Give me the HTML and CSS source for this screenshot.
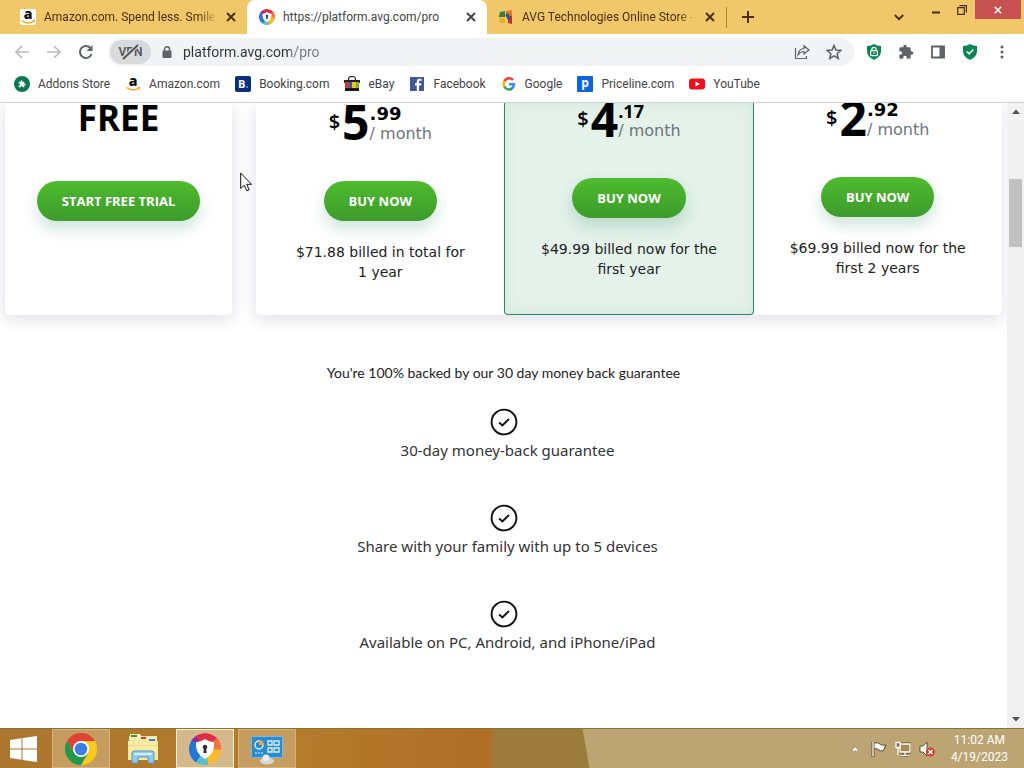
FILE: index.html
```html
<!DOCTYPE html>
<html lang="en">
<head>
<meta charset="utf-8">
<title>platform.avg.com/pro</title>
<meta name="viewport" content="width=device-width, initial-scale=1">
<link rel="stylesheet" href="styles.css">
</head>
<body>
<svg class="defs" aria-hidden="true">
  <symbol id="x" viewBox="0 0 10 10"><path d="M1 1l8 8M9 1L1 9" fill="none" stroke="currentColor" stroke-width="1.9"/></symbol>
  <symbol id="check" viewBox="0 0 28 28"><circle cx="14" cy="14" r="12.400" fill="none" stroke="#111" stroke-width="1.900"/><path d="M9.200 14.500l3.200 3 6.600-6.500" fill="none" stroke="#111" stroke-width="1.900"/></symbol>
  <symbol id="puzzle" viewBox="0 0 24 24"><path d="M20.500 11H19V7a2 2 0 0 0-2-2h-4V3.500a2.500 2.500 0 0 0-5 0V5H4a2 2 0 0 0-2 2v3.800h1.500a2.700 2.700 0 0 1 0 5.400H2V20a2 2 0 0 0 2 2h3.800v-1.500a2.700 2.700 0 0 1 5.400 0V22H17a2 2 0 0 0 2-2v-4h1.500a2.500 2.500 0 0 0 0-5z" fill="currentColor"/></symbol>
  <symbol id="avg" viewBox="0 0 32 32">
    <g fill="none" stroke-width="9">
      <path d="M6 10A11.500 11.500 0 0 1 17 5.500" stroke="#8b2b9d"/>
      <path d="M9.500 7A11.500 11.500 0 0 1 26 10" stroke="#e22c45"/>
      <path d="M24.500 8A11.500 11.500 0 0 1 27.200 19" stroke="#f5713d"/>
      <path d="M27.500 16.500A11.500 11.500 0 0 1 16 27.500" stroke="#fbb92b"/>
      <path d="M18.500 27.200A11.500 11.500 0 0 1 8 24.200" stroke="#54c3cf"/>
      <path d="M9.500 25.500A11.500 11.500 0 0 1 6.500 9.500" stroke="#2475d6"/>
    </g>
    <path d="M16 6q4 3 9 3.300 1.500 11-9 16.700Q5.500 20.300 7 9.300q5-.3 9-3.300z" fill="#fff"/>
    <circle cx="16" cy="14" r="2.300" fill="#333"/><path d="M15 14h2l.7 6h-3.400z" fill="#333"/>
  </symbol>
</svg>

<header class="browser">
  <div class="tabstrip">
    <nav class="tabs" aria-label="Tabs">
      <div class="tab tab-first">
        <svg class="favicon favicon-tile" viewBox="0 0 16 16"><text x="8" y="10" text-anchor="middle" font-family="Open Sans, sans-serif" font-weight="800" font-size="14" fill="#111">a</text><path d="M1.500 11.500q6.500 4.500 12 .8" fill="none" stroke="#f5a51c" stroke-width="1.500"/><path d="M12.200 11.300l2.600-.2-.8 2.500" fill="none" stroke="#f5a51c"/></svg>
        <a class="tab-title tab-fade" href="#">Amazon.com. Spend less. Smile more.</a>
        <button class="tab-close" aria-label="Close tab"><svg class="i10"><use href="#x"/></svg></button>
      </div>
      <div class="tab tab-active">
        <svg class="favicon"><use href="#avg"/></svg>
        <a class="tab-title" href="#">https://platform.avg.com/pro</a>
        <button class="tab-close" aria-label="Close tab"><svg class="i10"><use href="#x"/></svg></button>
      </div>
      <div class="tab tab-last">
        <svg class="favicon" viewBox="0 0 16 16"><path d="M2 3l5-1v6H1z" fill="#33813b"/><path d="M8 2l6-1v6L8 8z" fill="#e27b1f"/><path d="M1 9h6v5H2z" fill="#f0a92a"/><path d="M6 6l4 3v5l4 1V7z" fill="#c02c2b"/><path d="M8 4l3 1 1 6-3-1z" fill="#1b5c9e"/></svg>
        <a class="tab-title tab-fade" href="#">AVG Technologies Online Store -</a>
        <button class="tab-close" aria-label="Close tab"><svg class="i10"><use href="#x"/></svg></button>
      </div>
      <button class="new-tab" aria-label="New tab"><svg class="i12" viewBox="0 0 12 12"><path d="M6 0v12M0 6h12" stroke="currentColor" stroke-width="2"/></svg></button>
    </nav>
    <div class="window-controls">
      <button class="tab-search" aria-label="Search tabs"><svg class="i10" viewBox="0 0 10 10"><path d="M.8 3L5 7.200 9.200 3" fill="none" stroke="currentColor" stroke-width="2"/></svg></button>
      <button class="win-btn" aria-label="Minimize"><svg class="i10" viewBox="0 0 10 10"><path d="M1 7.500h8" stroke="currentColor" stroke-width="2"/></svg></button>
      <button class="win-btn" aria-label="Restore"><svg class="i10" viewBox="0 0 10 10"><path d="M.7 2.700h6.600v6.600H.7zM2.500.6h6.900v6.900" fill="none" stroke="currentColor" stroke-width="1.200"/></svg></button>
      <button class="win-btn win-close" aria-label="Close"><svg class="i8"><use href="#x"/></svg></button>
    </div>
  </div>

  <div class="toolbar">
    <button class="tool tool-dim" aria-label="Back"><svg class="i16" viewBox="0 0 16 16"><path d="M15 8H2M8 2L2 8l6 6" fill="none" stroke="currentColor" stroke-width="1.700"/></svg></button>
    <button class="tool tool-dim" aria-label="Forward"><svg class="i16" viewBox="0 0 16 16"><path d="M1 8h13M8 2l6 6-6 6" fill="none" stroke="currentColor" stroke-width="1.700"/></svg></button>
    <button class="tool" aria-label="Reload"><svg class="i16" viewBox="0 0 16 16"><path d="M13.600 10A6 6 0 1 1 12.500 4" fill="none" stroke="currentColor" stroke-width="2"/><path d="M14.500 1v6h-6z" fill="currentColor"/></svg></button>
    <div class="omnibox">
      <button class="vpn">VPN<svg class="vpn-slash" viewBox="0 0 24 16"><path d="M5 15L20 1" stroke="#d9dadc" stroke-width="4"/><path d="M5 15L20 1" stroke="#555" stroke-width="2"/></svg></button>
      <svg class="lock" viewBox="0 0 10 12"><path d="M2.500 5V3.300a2.500 2.500 0 0 1 5 0V5" fill="none" stroke="#5f6368" stroke-width="1.400"/><rect x=".5" y="4.500" width="9" height="7.500" rx="1" fill="#5f6368"/></svg>
      <input class="url" type="text" aria-label="Address" value="platform.avg.com/pro">
      <button class="tool" aria-label="Share"><svg class="i16" viewBox="0 0 16 16"><path d="M1.500 4v10.500h11V12M4 11q.5-6 6-6.500V1.800L15 6l-5 4V7.500Q6.500 7.500 4 11z" fill="none" stroke="currentColor" stroke-width="1.200"/></svg></button>
      <button class="tool" aria-label="Bookmark"><svg class="i16" viewBox="0 0 16 16"><path d="M8 1.500l1.900 4.600 5 .4-3.800 3.200 1.200 4.800L8 11.900l-4.300 2.600 1.200-4.800L1.100 6.500l5-.4z" fill="none" stroke="currentColor" stroke-width="1.500"/></svg></button>
    </div>
    <div class="extensions">
      <button class="tool" aria-label="Secure browsing"><svg class="i16" viewBox="0 0 16 16"><path d="M8 0q3 2 7 2v5q0 6-7 9-7-3-7-9V2q4 0 7-2z" fill="#0b8550"/><path d="M5.900 7V5.500a2.100 2.100 0 0 1 4.200 0V7" fill="none" stroke="#fff" stroke-width="1.200"/><rect x="4.600" y="6.600" width="6.800" height="5" rx="1" fill="none" stroke="#fff" stroke-width="1.200"/><path d="M8 8v2" stroke="#fff"/></svg></button>
      <button class="tool" aria-label="Extensions"><svg class="i16"><use href="#puzzle"/></svg></button>
      <button class="tool" aria-label="Side panel"><svg class="i16" viewBox="0 0 16 16"><path d="M2 2.500h12v11H2z" fill="none" stroke="currentColor" stroke-width="1.800"/><path d="M9.500 2h5v12h-5z" fill="currentColor"/></svg></button>
      <button class="tool" aria-label="Site safety"><svg class="i16" viewBox="0 0 16 16"><path d="M8 0q3 2 7 2v5q0 6-7 9-7-3-7-9V2q4 0 7-2z" fill="#0b8550"/><path d="M4.800 7.500l2.300 2.300 4.200-4.300" fill="none" stroke="#fff" stroke-width="1.600"/></svg></button>
      <button class="tool" aria-label="Menu"><svg class="i16" viewBox="0 0 16 16"><g fill="currentColor"><circle cx="8" cy="3" r="1.500"/><circle cx="8" cy="8" r="1.500"/><circle cx="8" cy="13" r="1.500"/></g></svg></button>
    </div>
  </div>

  <nav class="bookmarks" aria-label="Bookmarks">
    <a class="bookmark" href="#"><svg class="i16" viewBox="0 0 16 16"><circle cx="8" cy="8" r="8" fill="#0c7a4d"/><svg x="4" y="4" width="8" height="8" color="#fff"><use href="#puzzle"/></svg></svg>Addons Store</a>
    <a class="bookmark" href="#"><svg class="i16" viewBox="0 0 16 16"><text x="8" y="10" text-anchor="middle" font-family="Open Sans, sans-serif" font-weight="800" font-size="14" fill="#111">a</text><path d="M1.500 11.500q6.500 4.500 12 .8" fill="none" stroke="#f5a51c" stroke-width="1.500"/><path d="M12.200 11.300l2.600-.2-.8 2.500" fill="none" stroke="#f5a51c"/></svg>Amazon.com</a>
    <a class="bookmark" href="#"><svg class="i16" viewBox="0 0 16 16"><rect width="16" height="16" rx="2" fill="#0c2f79"/><text x="3" y="12" font-family="Open Sans, sans-serif" font-weight="700" font-size="11" fill="#fff">B</text><circle cx="12" cy="11" r="1.100" fill="#35a8e8"/></svg>Booking.com</a>
    <a class="bookmark" href="#"><svg class="i16" viewBox="0 0 16 16"><path d="M4.500 5V3.500q0-3 3.500-3t3.500 3V5" fill="none" stroke="#222" stroke-width="1.200"/><path d="M0 4h16v3H0z" fill="#222"/><path d="M1 6h4v6H1z" fill="#e3302d"/><path d="M5 6h3v6H5z" fill="#1c61c9"/><path d="M8 6h4v6H8z" fill="#f4c415"/><path d="M12 6h3v6h-3z" fill="#79b52b"/><path d="M1 12h14v3H1z" fill="#181818"/></svg>eBay</a>
    <a class="bookmark" href="#"><svg class="i16" viewBox="0 0 16 16"><path d="M1 1h14v14H1z" fill="#3f5a9a"/><path d="M10 15V9.500h2.200V7.300H10V6q0-1.200 1.200-1.200h1.300V2.700h-2Q7.800 2.700 7.800 5.500v1.800H6v2.200h1.800V15z" fill="#fff"/></svg>Facebook</a>
    <a class="bookmark" href="#"><svg class="i16" viewBox="0 0 16 16"><g fill="none" stroke-width="2.500"><path d="M12 4A5 5 0 0 0 3.500 5.500" stroke="#e94335"/><path d="M3.700 5A5 5 0 0 0 3.600 11" stroke="#fabb05"/><path d="M3.400 10.500A5 5 0 0 0 11.500 12" stroke="#34a353"/><path d="M11 12.300Q13 10.700 13 8.200H8" stroke="#4285f4"/></g></svg>Google</a>
    <a class="bookmark" href="#"><svg class="i16" viewBox="0 0 16 16"><rect width="16" height="16" rx="1" fill="#0b63dd"/><text x="8" y="11" text-anchor="middle" font-family="Open Sans, sans-serif" font-weight="700" font-size="12" fill="#fff">p</text></svg>Priceline.com</a>
    <a class="bookmark" href="#"><svg class="i16" viewBox="0 0 16 16"><rect y="2.500" width="16" height="11" rx="3" fill="#f0101c"/><path d="M6.500 5.500v5L11 8z" fill="#fff"/></svg>YouTube</a>
  </nav>
</header>

<div class="viewport">
  <main class="page">
    <section class="pricing">
      <article class="plan plan-free">
        <div class="price"><strong class="free">FREE</strong></div>
        <button class="cta">START FREE TRIAL</button>
      </article>
      <div class="paid">
        <article class="plan">
          <div class="price"><span class="currency">$</span><strong class="whole">5</strong><span class="rest"><b class="cents">.99</b><span class="per">/ month</span></span></div>
          <button class="cta">BUY NOW</button>
          <p class="billed">$71.88 billed in total for<br>1 year</p>
        </article>
        <article class="plan plan-featured">
          <div class="price"><span class="currency">$</span><strong class="whole">4</strong><span class="rest"><b class="cents cents-narrow">.17</b><span class="per">/ month</span></span></div>
          <button class="cta">BUY NOW</button>
          <p class="billed">$49.99 billed now for the<br>first year</p>
        </article>
        <article class="plan plan-long">
          <div class="price"><span class="currency">$</span><strong class="whole">2</strong><span class="rest"><b class="cents">.92</b><span class="per">/ month</span></span></div>
          <button class="cta">BUY NOW</button>
          <p class="billed">$69.99 billed now for the<br>first 2 years</p>
        </article>
      </div>
    </section>
    <h2 class="guarantee">You're 100% backed by our 30 day money back guarantee</h2>
    <ul class="benefits">
      <li class="benefit"><svg class="check"><use href="#check"/></svg><span class="benefit-text">30-day money-back guarantee</span></li>
      <li class="benefit"><svg class="check"><use href="#check"/></svg><span class="benefit-text">Share with your family with up to 5 devices</span></li>
      <li class="benefit"><svg class="check"><use href="#check"/></svg><span class="benefit-text">Available on PC, Android, and iPhone/iPad</span></li>
    </ul>
    <svg class="cursor" viewBox="0 0 12 20"><path d="M.7 1v15.500l3.600-3.300 2.500 5.600 2.400-1-2.500-5.500h4.800z" fill="#fff" stroke="#111"/></svg>
  </main>
  <div class="scrollbar">
    <button class="scroll-btn" aria-label="Scroll up"><svg class="arrow" viewBox="0 0 8 5"><path d="M0 5l4-4.500L8 5z" fill="#505050"/></svg></button>
    <div class="track"><div class="thumb"></div></div>
    <button class="scroll-btn" aria-label="Scroll down"><svg class="arrow" viewBox="0 0 8 5"><path d="M0 0l4 4.500L8 0z" fill="#505050"/></svg></button>
  </div>
</div>

<footer class="taskbar">
  <div class="apps">
    <button class="start" aria-label="Start"><svg class="win-logo" viewBox="0 0 28 26"><path d="M0 4l11.500-1.700v10.200H0zM12.500 2.100L27 0v12.500H12.500zM0 13.500h11.500v10.200L0 22zM12.500 13.500H27V26l-14.500-2.100z" fill="#fff"/></svg></button>
    <button class="app app-open" aria-label="Google Chrome"><svg class="i32" viewBox="0 0 32 32"><path d="M9 20L2.140 8A16 16 0 0 1 29.860 8H16z" fill="#df4334"/><path d="M16 8h13.860A16 16 0 0 1 16 32l7-12z" fill="#fbc91c"/><path d="M9 20L2.140 8A16 16 0 0 0 16 32l7-12z" fill="#23974b"/><circle cx="16" cy="16" r="8" fill="#fff"/><circle cx="16" cy="16" r="6.300" fill="#3a7de5"/></svg></button>
    <button class="app" aria-label="File Explorer"><svg class="i32" viewBox="0 0 32 32"><path d="M2 3h28v5H2z" fill="#e9e2b4"/><path d="M3 1h10l2 3h14v3H3z" fill="#f8efb4"/><path d="M4 2h6v2H4z" fill="#2d9b3c"/><path d="M14 4h5v2h-5z" fill="#cf3d36"/><path d="M22 6h6v2h-6z" fill="#3f82c7"/><path d="M1 8h30v19H1z" fill="#f8ea9f"/><path d="M1 12h30v1H1z" fill="#eadb8a"/><path d="M5 30V20q0-2 2-2h18q2 0 2 2v10h-6v-6H11v6z" fill="#92cbed" stroke="#4d99c9"/><path d="M7 20h18v2H7z" fill="#d6effb"/></svg></button>
    <button class="app app-open app-current" aria-label="AVG Secure Browser"><svg class="i32"><use href="#avg"/></svg></button>
    <button class="app app-open" aria-label="Control Panel"><svg class="i32" viewBox="0 0 32 32"><rect x=".5" y="3.500" width="31" height="21" rx="1" fill="#2b8bcd" stroke="#77b9e3"/><circle cx="8" cy="12" r="4" fill="none" stroke="#dceefa" stroke-width="1.500"/><path d="M8 12V7a5 5 0 0 1 5 5z" fill="#f2a63a"/><path d="M17 8h4v4h-4zM23 8h5v4h-5zM17 15h4v4h-4zM23 15h5v4h-5z" fill="none" stroke="#dceefa" stroke-width="1.300"/><path d="M4 20h9" stroke="#dceefa" stroke-dasharray="2 1"/><ellipse cx="16" cy="28" rx="7" ry="3.500" fill="#d7d5d2"/><circle cx="15" cy="25" r="3.500" fill="#ecebe9"/></svg></button>
  </div>
  <div class="tray">
    <svg class="tray-up" viewBox="0 0 8 5"><path d="M0 5l4-4.500L8 5z" fill="#fff" stroke="#6d5a35" stroke-width=".5"/></svg>
    <svg class="i16" viewBox="0 0 16 16"><path d="M2 1v15" stroke="#5e4c2c" stroke-width="3"/><path d="M3 2q4-1 6 1t6 1l-3 6q-3 0-5-1.500T3 8z" fill="#fff" stroke="#5e4c2c"/><path d="M2 1v14.500" stroke="#fff" stroke-width="1.300"/></svg>
    <svg class="i16" viewBox="0 0 16 16"><path d="M5 3h10v8H5zM10 11v3M6 14.500h8" fill="none" stroke="#5e4c2c" stroke-width="3"/><path d="M5 3h10v8H5zM10 11v3M6 14.500h8" fill="#a88b53" stroke="#fff" stroke-width="1.300"/><path d="M1 1.500h4v5H1zM3 7v7" fill="#8b7140" stroke="#fff" stroke-width="1.300"/></svg>
    <svg class="i16" viewBox="0 0 16 16"><path d="M1 5h3l4-4v14l-4-4H1z" fill="#fff" stroke="#5e4c2c"/><circle cx="11.500" cy="11" r="4.500" fill="#d54335"/><path d="M9.500 9l4 4M13.500 9l-4 4" stroke="#fff" stroke-width="1.400"/></svg>
    <div class="clock"><time>11:02 AM</time><time>4/19/2023</time></div>
  </div>
</footer>
</body>
</html>
```
FILE: styles.css
```css
* { box-sizing: border-box; }
body {
  margin: 0;
  height: 100vh;
  display: flex;
  flex-direction: column;
  overflow: hidden;
  background: #fff;
  color: #000;
  font-family: Roboto, "Open Sans", sans-serif;
  font-size: 12px;
}
button {
  border: 0;
  padding: 0;
  background: none;
  color: inherit;
  font: inherit;
  display: flex;
  align-items: center;
  justify-content: center;
}
a { color: inherit; text-decoration: none; }
svg { display: block; flex: none; }
.defs { position: absolute; width: 0; height: 0; }
.i8 { width: 8px; height: 8px; }
.i10 { width: 10px; height: 10px; }
.i12 { width: 12px; height: 12px; }
.i16 { width: 16px; height: 16px; }
.i32 { width: 32px; height: 32px; }

/* Tab strip */
.tabstrip {
  display: flex;
  justify-content: space-between;
  height: 34px;
  background: #f0c869;
  color: #4a2d10;
}
.tabs { display: flex; min-width: 0; }
.tab {
  display: flex;
  align-items: center;
  gap: 8px;
  width: 240px;
  padding: 0 10px 0 12px;
}
.tab-first { width: 247px; padding-left: 20px; }
.tab-active { background: #fff; color: #444; border-radius: 8px 8px 0 0; }
.tab-last { padding-left: 11px; border-right: 1px solid; border-image: linear-gradient(transparent 8px, #a88538 8px 27px, transparent 27px) 1; }
.favicon { width: 16px; height: 16px; }
.favicon-tile { background: #fff; border-radius: 2px; }
.tab-title { flex: 1; min-width: 0; overflow: hidden; white-space: nowrap; line-height: 20px; }
.tab-fade { mask-image: linear-gradient(90deg, #000 90%, transparent); }
.tab-close { width: 12px; height: 16px; }
.new-tab { width: 42px; }
.window-controls { display: flex; align-items: flex-start; }
.tab-search { width: 24px; height: 34px; }
.win-btn { width: 26px; height: 19px; }
.tab-search + .win-btn { margin-left: 12px; }
.win-close { width: 46px; margin-right: 3px; background: #c75050; color: #fff; }

/* Toolbar */
.toolbar {
  display: flex;
  align-items: center;
  gap: 8px;
  height: 36px;
  padding: 0 10px;
  color: #5f6368;
}
.tool { width: 24px; height: 24px; }
.tool-dim { color: #bbb; }
.omnibox {
  flex: 1;
  display: flex;
  align-items: center;
  gap: 8px;
  height: 28px;
  padding: 0 8px 0 2px;
  margin-left: 2px;
  border-radius: 14px;
  background: #f1f3f4;
}
.vpn {
  position: relative;
  width: 41px;
  height: 24px;
  border-radius: 12px;
  background: #d9dadc;
  color: #555;
  font-weight: 600;
}
.vpn-slash { position: absolute; inset: 4px 8px; width: 24px; height: 16px; }
.lock { width: 10px; height: 12px; margin: 0 3px; }
.url {
  flex: 1;
  min-width: 0;
  border: 0;
  padding: 0;
  outline: 0;
  color: transparent;
  background: linear-gradient(90deg, #303236 108px, #74787c 108px) text;
  font: 14px/20px Roboto, sans-serif;
}
.extensions { display: flex; gap: 8px; }

/* Bookmarks */
.bookmarks {
  display: flex;
  align-items: center;
  gap: 15px;
  height: 33px;
  padding: 0 14px 5px;
  border-bottom: 1px solid #cfd1d3;
  color: #444;
}
.bookmark { display: flex; align-items: center; gap: 8px; white-space: nowrap; line-height: 20px; }

/* Page */
.viewport { flex: 1; min-height: 0; display: flex; }
.page { position: relative; flex: 1; overflow: hidden; }
.pricing {
  display: grid;
  grid-template-columns: 227fr 746fr;
  gap: 24px;
  padding: 0 5px;
}
.paid { display: grid; grid-template-columns: repeat(3, 1fr); }
.plan-free, .paid {
  border-radius: 0 0 5px 5px;
  background: #fff;
  box-shadow: 0 4px 16px #28285a26;
}
.plan {
  display: flex;
  flex-direction: column;
  align-items: center;
  height: 212px;
}
.plan-featured {
  margin: 0 -1px;
  border: solid #31866a;
  border-width: 0 1px 1px;
  border-radius: 0 0 4px 4px;
  background: #e4f2ea;
  box-shadow: inset 0 0 16px #0c7a4d14;
}
.price {
  display: flex;
  align-items: center;
  justify-content: center;
  height: 38px;
  margin-bottom: 40px;
}
.plan-featured .price { margin-top: -3px; }
.plan-long .price { margin-top: -4px; }
.free { font: bold 35px/30px "Open Sans", sans-serif; margin-bottom: 8px; }
.currency { margin-right: 2px; font: 600 20px/28px "Open Sans", sans-serif; }
.whole { font: bold 48px/38px "Open Sans", sans-serif; }
.rest { display: flex; flex-direction: column; margin-top: 4px; }
.cents { font: bold 18px/20px "DejaVu Sans", sans-serif; }
.cents-narrow { font-family: "Open Sans", sans-serif; }
.per { color: #6d747c; font: 16px/20px "DejaVu Sans", sans-serif; }
.cta {
  height: 40px;
  padding: 0 25px;
  border-radius: 20px;
  background: linear-gradient(#4fbb2e, #3c9b2b);
  box-shadow: 0 8px 16px #0c7a4d33;
  color: #fff;
  font: bold 13px/20px "Open Sans", sans-serif;
}
.billed { margin: 21px 0 0; color: #222; font: 14px/20px "DejaVu Sans", sans-serif; text-align: center; }
.guarantee {
  margin: 48px 0 0;
  color: #222;
  font: 14px/20px Lato, sans-serif;
  text-align: center;
}
.benefits {
  display: flex;
  flex-direction: column;
  gap: 44px;
  margin: 25px 0 0;
  padding: 0;
  list-style: none;
}
.benefit { display: flex; flex-direction: column; align-items: center; gap: 4px; }
.check { width: 28px; height: 28px; }
.benefit-text { padding-left: 8px; color: #333; font: 15px/20px "Noto Sans", sans-serif; }
.cursor { position: absolute; left: 240px; top: 69px; width: 12px; height: 20px; }

/* Scrollbar */
.scrollbar { display: flex; flex-direction: column; width: 17px; background: #f1f1f1; }
.scroll-btn { height: 17px; }
.arrow { width: 8px; height: 5px; }
.track { flex: 1; padding: 59px 2px 0; }
.thumb { height: 68px; background: #c1c1c1; }

/* Taskbar */
.taskbar {
  display: flex;
  justify-content: space-between;
  height: 40px;
  border-top: 1px solid #8a7038;
  background:
    linear-gradient(80deg, transparent 580px, #bca572 581px),
    linear-gradient(90deg, #ad762f, #b47b2b 300px, #b06e27 490px, #9c7c3b 494px);
  color: #fff;
}
.apps { display: flex; gap: 2px; }
.start { width: 48px; margin-right: 2px; }
.win-logo { width: 28px; height: 26px; }
.app { width: 58px; }
.app-open { border: 1px solid #d6b27c; background: #c59d61; }
.app + .app { margin-left: 2px; }
.app-current { border-color: #fff0cb; background: #d4b98d; }
.tray { display: flex; align-items: center; gap: 8px; padding-right: 16px; }
.tray-up { width: 8px; height: 5px; margin-right: 4px; }
.clock { display: flex; flex-direction: column; align-items: center; margin-left: 8px; line-height: 17px; }
```
